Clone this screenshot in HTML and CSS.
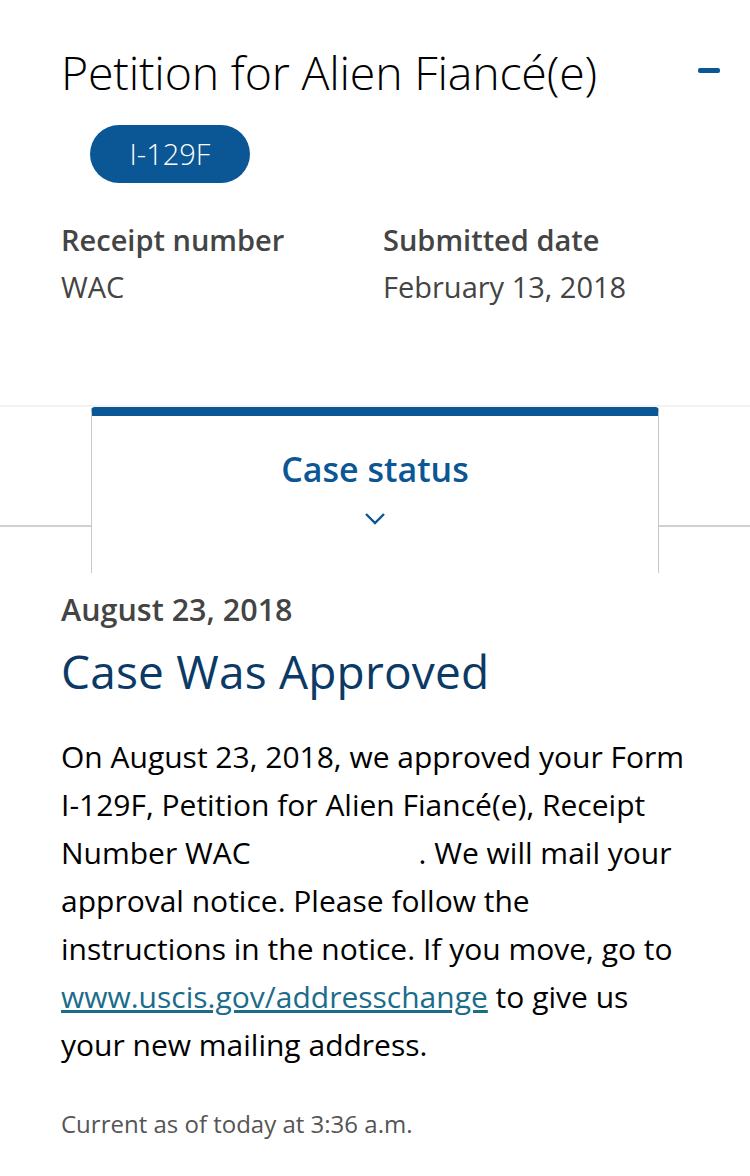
FILE: index.html
```html
<!DOCTYPE html>
<html lang="en">
<head>
    <meta charset="UTF-8">
    <meta name="viewport" content="width=device-width, initial-scale=1.0">
    <title>Case Status</title>
    <link rel="stylesheet" href="styles.css">
</head>
<body>
    <div class="summary">
        <div class="title-row">
            <h1 class="title">Petition for Alien Fiancé(e)</h1>
            <span class="collapse"></span>
        </div>
        <span class="form-pill">I-129F</span>
        <div class="facts">
            <div class="fact">
                <div class="fact-label">Receipt number</div>
                <div class="fact-value">WAC</div>
            </div>
            <div class="fact">
                <div class="fact-label">Submitted date</div>
                <div class="fact-value">February 13, 2018</div>
            </div>
        </div>
    </div>

    <div class="tabs">
        <div class="tab-line"></div>
        <div class="tab">
            <div class="tab-title">Case status</div>
            <svg class="chevron" width="22" height="13" viewBox="0 0 22 13">
                <path d="M2 2 L11 11 L20 2" fill="none" stroke="#0b5694" stroke-width="2.4"/>
            </svg>
        </div>
        <div class="tab-line"></div>
    </div>

    <div class="status">
        <div class="status-date">August 23, 2018</div>
        <h2 class="status-title">Case Was Approved</h2>
        <p class="status-text">On August 23, 2018, we approved your Form<br>
            I-129F, Petition for Alien Fiancé(e), Receipt<br>
            Number WAC<span class="redacted"></span>. We will mail your<br>
            approval notice. Please follow the<br>
            instructions in the notice. If you move, go to<br>
            <a href="#">www.uscis.gov/addresschange</a> to give us<br>
            your new mailing address.</p>
        <div class="updated">Current as of today at 3:36 a.m.</div>
    </div>
</body>
</html>
```

FILE: styles.css
```css
body {
    margin: 0;
    background: #fff;
    font-family: "Open Sans", Lato, sans-serif;
    color: #000;
}

.summary {
    padding: 42px 30px 0 61px;
    height: 363px;
    border-bottom: 2px solid #f3f3f3;
}

.title-row {
    display: flex;
    justify-content: space-between;
    align-items: center;
}

.title {
    margin: 0;
    font-size: 46.5px;
    font-weight: 300;
    line-height: 60px;
    letter-spacing: -0.2px;
}

.collapse {
    display: block;
    width: 22px;
    height: 5px;
    border-radius: 2px;
    background: #0b5694;
    margin-top: -4px;
}

.form-pill {
    display: inline-block;
    margin: 23px 0 0 29px;
    width: 160px;
    height: 58px;
    line-height: 58px;
    border-radius: 29px;
    background: #0b5694;
    color: #fff;
    font-size: 29px;
    font-weight: 300;
    text-align: center;
}

.facts {
    display: flex;
    margin-top: 36px;
}

.fact {
    width: 322px;
    color: #444;
}

.fact-label {
    font-size: 29px;
    font-weight: 600;
    line-height: 42px;
}

.fact-value {
    font-size: 29px;
    font-weight: 400;
    line-height: 52px;
}

.tabs {
    display: flex;
    align-items: flex-start;
}

.tab-line {
    flex: 1;
    height: 118px;
    border-bottom: 2px solid #d0d0d0;
}

.tab {
    width: 566px;
    height: 157px;
    border: 1px solid #c8c8c8;
    border-top: 9px solid #0b5694;
    border-bottom: none;
    border-radius: 4px 4px 0 0;
    text-align: center;
}

.tab-title {
    margin-top: 32px;
    color: #0b5694;
    font-size: 34px;
    font-weight: 600;
    line-height: 42px;
}

.chevron {
    display: block;
    margin: 22px auto 0;
}

.status {
    padding: 15px 30px 0 61px;
}

.status-date {
    color: #444;
    font-size: 30.5px;
    font-weight: 600;
    line-height: 42px;
}

.status-title {
    margin: 12px 0 0;
    color: #0b3a66;
    font-size: 46px;
    font-weight: 400;
    line-height: 58px;
    letter-spacing: 0.2px;
}

.status-text {
    margin: 33px 0 0;
    font-size: 30px;
    line-height: 48px;
}

.status-text a {
    color: #1b6b8a;
}

.redacted {
    display: inline-block;
    width: 168px;
}

.updated {
    margin-top: 40px;
    color: #555;
    font-size: 24px;
    line-height: 30px;
}
```
